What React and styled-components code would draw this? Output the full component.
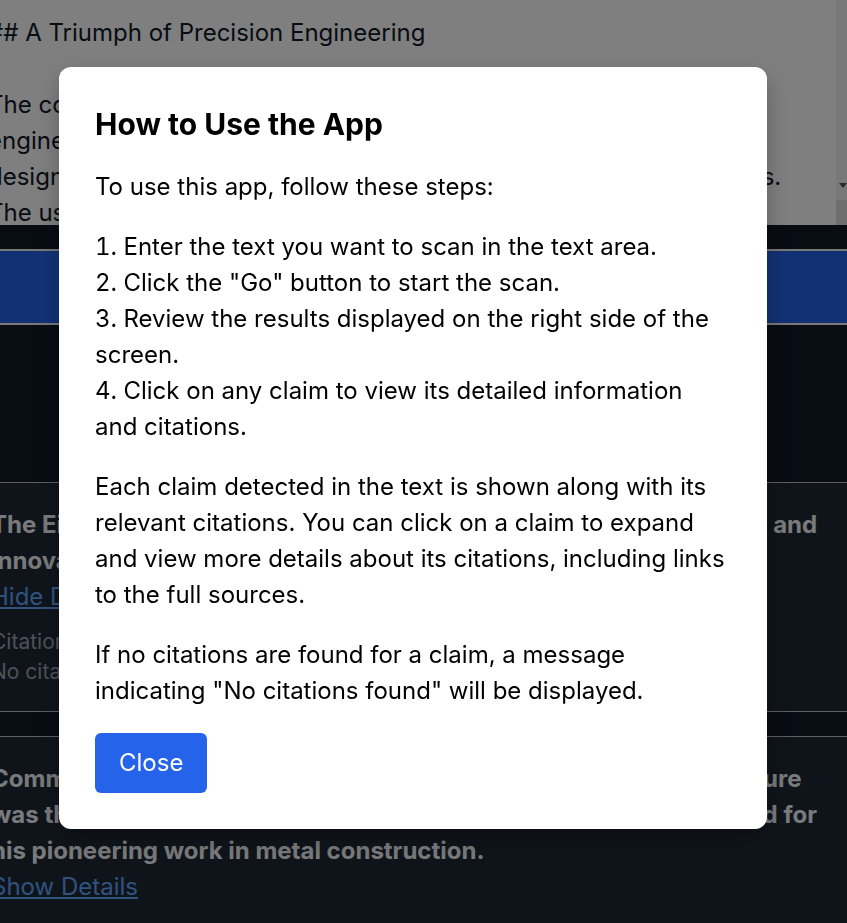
import React from "react";
import styled, { createGlobalStyle } from "styled-components";

const GlobalStyle = createGlobalStyle`
  html, body {
    margin: 0;
    padding: 0;
    overflow: hidden;
    background: #111827;
    font-family: Inter, "Noto Sans", sans-serif;
  }
  * { box-sizing: border-box; }
`;

const draftLines = [
  "## A Triumph of Precision Engineering",
  "",
  "The construction of the Eiffel Tower was a remarkable feat of",
  "engineering, requiring over 18,000 individual wrought iron parts",
  "designed with meticulous calculations to withstand the fiercest winds.",
  "The use of puddled iron allowed the tower to be light yet robust, so it",
  "could rise while the riveted lattice kept the whole structure stiff.",
];

const claims = [
  {
    text: "The Eiffel Tower stands as a lasting monument to French ingenuity and innovation.",
    open: true,
  },
  {
    text: "Commissioned for the 1889 World's Fair, the innovative iron structure was the work of engineer Gustave Eiffel, who was widely renowned for his pioneering work in metal construction.",
    open: false,
  },
];

export default function App() {
  return (
    <>
      <GlobalStyle />
      <Page>
        <Editor>
          <EditorText>{draftLines.join("\n")}</EditorText>
          <Scrollbar>
            <Track>
              <svg width="8" height="5" viewBox="0 0 8 5">
                <polygon points="0,0 8,0 4,5" fill="#505050" />
              </svg>
            </Track>
            <Corner />
          </Scrollbar>
        </Editor>

        <GoButton>Go</GoButton>

        <Results>
          <ResultsTitle>Results</ResultsTitle>
          {claims.map((claim, i) => (
            <ClaimCard key={i}>
              <ClaimText>{claim.text}</ClaimText>
              <Toggle href="#">{claim.open ? "Hide Details" : "Show Details"}</Toggle>
              {claim.open && (
                <Citations>
                  <div>Citations:</div>
                  <div>No citations found</div>
                </Citations>
              )}
            </ClaimCard>
          ))}
        </Results>
      </Page>

      <Overlay>
        <Modal>
          <ModalTitle>How to Use the App</ModalTitle>
          <ModalText>To use this app, follow these steps:</ModalText>
          <Steps>
            <li>Enter the text you want to scan in the text area.</li>
            <li>Click the "Go" button to start the scan.</li>
            <li>Review the results displayed on the right side of the screen.</li>
            <li>Click on any claim to view its detailed information and citations.</li>
          </Steps>
          <ModalText>
            Each claim detected in the text is shown along with its relevant
            citations. You can click on a claim to expand and view more details
            about its citations, including links to the full sources.
          </ModalText>
          <ModalText>
            If no citations are found for a claim, a message indicating "No
            citations found" will be displayed.
          </ModalText>
          <CloseButton>Close</CloseButton>
        </Modal>
      </Overlay>
    </>
  );
}

const Page = styled.div`
  margin-left: -9px;
  min-height: 1000px;
  background: #111827;
`;

const Editor = styled.div`
  display: flex;
  height: 225px;
  background: #ffffff;
`;

const EditorText = styled.div`
  flex: 1;
  margin-left: -3px;
  padding-top: 15px;
  overflow: hidden;
  white-space: pre;
  font-size: 24px;
  line-height: 36px;
  color: #111827;
`;

const Scrollbar = styled.div`
  width: 11px;
  display: flex;
  flex-direction: column;
`;

const Track = styled.div`
  flex: 1;
  background: #f1f1f1;
  display: flex;
  align-items: flex-end;
  justify-content: flex-end;
  padding-bottom: 12px;
`;

const Corner = styled.div`
  height: 25px;
  background: #dcdcdc;
`;

const GoButton = styled.button`
  display: block;
  width: 100%;
  margin-top: 24px;
  height: 76px;
  border: none;
  border-top: 2px solid #f0f0f0;
  border-bottom: 2px solid #f0f0f0;
  background: #2563eb;
  color: #ffffff;
  font-family: inherit;
  font-size: 24px;
  font-weight: 700;
`;

const Results = styled.div`
  padding-top: 30px;
  display: flex;
  flex-direction: column;
  gap: 24px;
`;

const ResultsTitle = styled.h2`
  margin: 0 0 61px;
  text-align: center;
  font-size: 30px;
  line-height: 42px;
  color: #f3f4f6;
`;

const ClaimCard = styled.div`
  background: #1f2937;
  border-top: 1px solid #b8bcc4;
  border-bottom: 1px solid #b8bcc4;
  padding: 24px 18px 24px 0;
`;

const ClaimText = styled.div`
  font-size: 24px;
  line-height: 36px;
  font-weight: 700;
  color: #f3f4f6;
`;

const Toggle = styled.a`
  display: inline-block;
  font-size: 24px;
  line-height: 36px;
  color: #60a5fa;
  text-decoration: underline;
`;

const Citations = styled.div`
  margin-top: 12px;
  font-size: 21px;
  line-height: 30px;
  color: #9ca3af;
`;

const Overlay = styled.div`
  position: fixed;
  inset: 0;
  background: rgba(0, 0, 0, 0.5);
  display: flex;
  align-items: flex-start;
  padding: 67px 0 0 59px;
`;

const Modal = styled.div`
  width: 708px;
  padding: 36px;
  background: #ffffff;
  border-radius: 12px;
  box-shadow: 0 10px 25px rgba(0, 0, 0, 0.25);
  color: #000000;
`;

const ModalTitle = styled.h2`
  margin: 0 0 24px;
  font-size: 30px;
  line-height: 42px;
  font-weight: 700;
`;

const ModalText = styled.p`
  margin: 0 0 24px;
  font-size: 24px;
  line-height: 36px;
`;

const Steps = styled.ol`
  margin: 0 0 24px;
  padding: 0;
  list-style: decimal inside;
  font-size: 24px;
  line-height: 36px;
`;

const CloseButton = styled.button`
  display: block;
  padding: 12px 24px;
  border: none;
  border-radius: 6px;
  background: #2563eb;
  color: #ffffff;
  font-family: inherit;
  font-size: 24px;
  line-height: 36px;
`;
